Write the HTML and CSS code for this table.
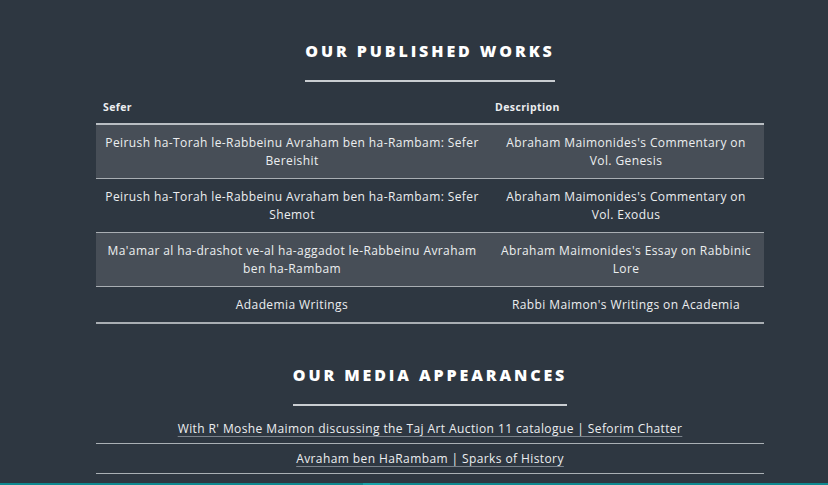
FILE: index.html
```html
<html>
<head>
<title>Published Works</title>
<link rel="stylesheet" href="styles.css">
</head>
<body>
 <div class="section">
    <h2 class="sectionTitle"><span>Our Published Works</span></h2>
    <table class="worksTable">
        <tr>
            <th class="colSefer">Sefer</th>
            <th class="colDesc">Description</th>
        </tr>
        <tr class="striped">
            <td>Peirush ha-Torah le-Rabbeinu Avraham ben ha-Rambam: Sefer Bereishit</td>
            <td>Abraham Maimonides's Commentary on Vol. Genesis</td>
        </tr>
        <tr>
            <td>Peirush ha-Torah le-Rabbeinu Avraham ben ha-Rambam: Sefer Shemot</td>
            <td>Abraham Maimonides's Commentary on Vol. Exodus</td>
        </tr>
        <tr class="striped">
            <td>Ma'amar al ha-drashot ve-al ha-aggadot le-Rabbeinu Avraham ben ha-Rambam</td>
            <td>Abraham Maimonides's Essay on Rabbinic Lore</td>
        </tr>
        <tr class="lastRow">
            <td>Adademia Writings</td>
            <td>Rabbi Maimon's Writings on Academia</td>
        </tr>
    </table>
 </div>
 <div class="section media">
    <h2 class="sectionTitle"><span>Our Media Appearances</span></h2>
    <ul class="mediaList">
        <li><a href="#">With R' Moshe Maimon discussing the Taj Art Auction 11 catalogue | Seforim Chatter</a></li>
        <li><a href="#">Avraham ben HaRambam | Sparks of History</a></li>
    </ul>
 </div>
 <div class="footer"><div class="footerTab"></div></div>
</body>
</html>
```

FILE: styles.css
```css
body          {margin: 0; padding-left: 32px; background-color: #2e3741;
               font-family: "Open Sans", sans-serif; color: #eceef0;}
.section      {width: 668px; margin: 0 auto; padding-top: 40px;}
.sectionTitle {margin: 0; text-align: center; font-size: 16px; line-height: 23px;
               font-weight: 800; letter-spacing: 2.9px; text-transform: uppercase;
               color: #ffffff;}
.sectionTitle span {display: inline-block; padding-bottom: 17px;
                    border-bottom: 2px solid #c9cdd1;}
.worksTable   {width: 100%; border-collapse: collapse; margin-top: 9px;
               font-size: 12px; letter-spacing: 0.4px;}
.worksTable th {text-align: left; font-size: 10.5px; font-weight: 700;
                padding: 8px 7px; line-height: 16px; letter-spacing: 0.4px;
                border-bottom: 2px solid #b9bec3;}
.colSefer     {width: 378px;}
.worksTable td {text-align: center; padding: 9px 8px 8px; line-height: 18px;
                border-bottom: 1px solid #a9aeb3;}
.striped      {background-color: #474e57;}
.lastRow td   {border-bottom: 2px solid #a9aeb3;}
.media        {padding-top: 40px;}
.mediaList    {list-style: none; margin: 8px 0 0 0; padding: 0;
               font-size: 12px; letter-spacing: 0.4px;}
.mediaList li {text-align: center; padding: 6px 0 5px; line-height: 18px;
               border-bottom: 1px solid #aab0b5;}
.mediaList a  {color: #eceef0; text-decoration: underline;
               text-decoration-color: #7b838c; text-underline-offset: 3px;}
.footer       {margin-top: 9px; margin-left: -32px; height: 20px; background-color: #0f8990;}
.footerTab    {margin-left: 363px; width: 27px; height: 20px; background-color: #17a4aa;}
```
